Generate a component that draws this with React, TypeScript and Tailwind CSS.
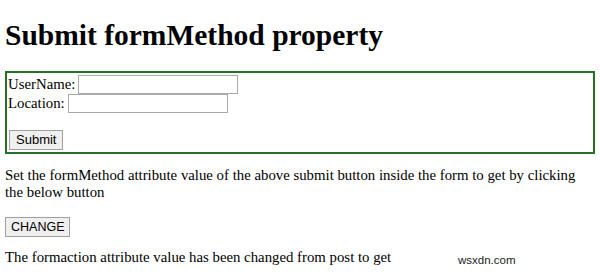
export default function App() {
  return (
    <div className="relative h-[273px] w-[600px] overflow-hidden bg-white px-[5px] font-['Liberation_Serif',serif] text-[14.8px] leading-[17px] text-black">
      <h1 className="pt-[18px] text-[29.5px] font-bold leading-[34px]">Submit formMethod property</h1>
      <form className="mt-[19px] border-2 border-[#247024] px-[1px] pb-[2px] pt-[2px]">
        <div className="flex items-center">
          <span>UserName:</span>
          <input className="ml-[3px] h-[19px] w-[160px] border border-[#a9a9a9]" />
        </div>
        <div className="flex items-center">
          <span>Location:</span>
          <input className="ml-[3px] h-[19px] w-[160px] border border-[#a9a9a9]" />
        </div>
        <div className="h-[17px]" />
        <button
          type="button"
          className="ml-[1px] h-[20px] border border-[#a0a0a0] bg-[#efefef] px-[6px] font-['Liberation_Sans',sans-serif] text-[13px] leading-[18px]"
        >
          Submit
        </button>
      </form>
      <p className="mt-[13px]">
        Set the formMethod attribute value of the above submit button inside the form to get by clicking the below button
      </p>
      <button
        type="button"
        className="mt-[16px] h-[20px] border border-[#a0a0a0] bg-[#efefef] px-[5px] font-['Liberation_Sans',sans-serif] text-[12.5px] leading-[18px]"
      >
        CHANGE
      </button>
      <p className="mt-[12px]">The formaction attribute value has been changed from post to get</p>
      <span className="absolute left-[458px] top-[252px] font-['Liberation_Sans',sans-serif] text-[11.5px] text-[#222]">wsxdn.com</span>
    </div>
  );
}
